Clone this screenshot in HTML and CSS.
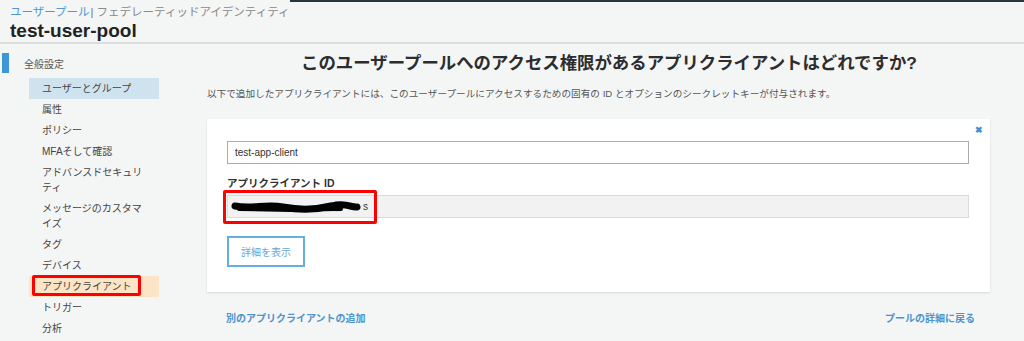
FILE: index.html
```html
<!DOCTYPE html>
<html lang="ja">
<head>
  <meta charset="UTF-8">
  <meta name="viewport" content="width=device-width, initial-scale=1.0">
  <title>test-user-pool - アプリクライアント</title>
  <link rel="stylesheet" href="styles.css">
</head>
<body>
  <div class="topbar"></div>

  <header class="page-header">
    <div class="crumbs">
      <a href="#" class="crumb-link">ユーザープール</a><span class="crumb-sep">|</span><span class="crumb-other">フェデレーティッドアイデンティティ</span>
    </div>
    <h1 class="pool-name">test-user-pool</h1>
  </header>

  <div class="layout">
    <nav class="sidebar">
      <div class="nav-section">
        <span class="nav-marker"></span>
        <span class="nav-title">全般設定</span>
      </div>
      <ul class="nav-list">
        <li class="nav-item selected">ユーザーとグループ</li>
        <li class="nav-item">属性</li>
        <li class="nav-item">ポリシー</li>
        <li class="nav-item">MFAそして確認</li>
        <li class="nav-item">アドバンスドセキュリティ</li>
        <li class="nav-item">メッセージのカスタマイズ</li>
        <li class="nav-item">タグ</li>
        <li class="nav-item">デバイス</li>
        <li class="nav-item current">アプリクライアント<span class="note-box"></span></li>
        <li class="nav-item">トリガー</li>
        <li class="nav-item">分析</li>
      </ul>
      <div class="nav-section">
        <span class="nav-marker"></span>
      </div>
    </nav>

    <main class="content">
      <h2 class="question">このユーザープールへのアクセス権限があるアプリクライアントはどれですか?</h2>
      <p class="intro">以下で追加したアプリクライアントには、このユーザープールにアクセスするための固有の ID とオプションのシークレットキーが付与されます。</p>

      <section class="client-card">
        <button class="close-btn" type="button">&#x2716;</button>
        <input class="client-name" type="text" value="test-app-client">
        <label class="field-label">アプリクライアント ID</label>
        <div class="client-id">
          <svg class="scribble" width="130" height="14" viewBox="0 0 130 14">
            <path d="M4 6 C20 9, 36 4, 52 7 S84 10, 100 6 S120 8, 126 7" fill="none" stroke="#000" stroke-width="7" stroke-linecap="round"/>
            <path d="M8 9 L60 10 L110 9" fill="none" stroke="#000" stroke-width="4" stroke-linecap="round"/>
          </svg>
          <span class="id-tail">s</span>
          <span class="note-box wide"></span>
        </div>
        <button class="details-btn" type="button">詳細を表示</button>
      </section>

      <div class="footer-links">
        <a href="#" class="action-link">別のアプリクライアントの追加</a>
        <a href="#" class="action-link">プールの詳細に戻る</a>
      </div>
    </main>
  </div>
</body>
</html>
```

FILE: styles.css
```css
html, body {
  height: 100%;
  overflow: hidden;
}

body {
  margin: 0;
  background-color: #f4f5f5;
  color: #444;
  font-family: "Liberation Sans", "Noto Sans CJK JP", sans-serif;
  position: relative;
}

.topbar {
  position: absolute;
  top: 0;
  left: 290px;
  right: 0;
  height: 2px;
  background: #2b3441;
}

.page-header {
  padding: 4px 10px 0;
  border-bottom: 2px solid #dcdddd;
}

.crumbs {
  font-size: 11.5px;
  line-height: 16px;
  color: #8a8a8a;
}

.crumb-link {
  color: #4f97cf;
  text-decoration: none;
}

.crumb-sep {
  color: #777;
  margin: 0 3px 0 1px;
}

.pool-name {
  margin: 0;
  font-size: 19px;
  line-height: 22px;
  color: #222;
}

.layout {
  display: flex;
}

/* sidebar */
.sidebar {
  width: 190px;
  flex-shrink: 0;
  padding-top: 9px;
}

.nav-section {
  display: flex;
  align-items: center;
  height: 20px;
}

.nav-marker {
  width: 7px;
  height: 20px;
  margin-left: 2px;
  background: #3d97d6;
}

.nav-title {
  margin-left: 15px;
  font-size: 10px;
  color: #555;
}

.nav-list {
  list-style: none;
  margin: 5px 0 5px;
  padding: 0;
}

.nav-item {
  position: relative;
  width: 130px;
  box-sizing: border-box;
  margin-left: 29px;
  padding: 3px 8px 3px 13px;
  font-size: 10px;
  line-height: 15px;
  color: #444;
}

.nav-item.selected {
  background: #cfe3ef;
}

.nav-item.current {
  background: #fbe5c6;
}

.note-box {
  position: absolute;
  left: 3px;
  top: -1px;
  width: 109px;
  height: 21px;
  box-sizing: border-box;
  border: 3px solid #f00;
  border-radius: 2px;
}

/* main */
.content {
  flex: 1;
  padding: 8px 34px 0 17px;
}

.question {
  margin: 0 0 13px 21px;
  text-align: center;
  font-size: 17.4px;
  line-height: 22px;
  color: #2d2d2d;
}

.intro {
  margin: 0 0 18px;
  font-size: 9.65px;
  line-height: 14px;
  color: #555;
}

.client-card {
  position: relative;
  background: #fff;
  padding: 22px 21px 25px 20px;
  box-shadow: 0 1px 2px rgba(0, 0, 0, 0.12);
}

.close-btn {
  position: absolute;
  top: 6px;
  right: 7px;
  padding: 0;
  border: none;
  background: none;
  color: #3f8fd0;
  font-size: 9px;
  font-weight: bold;
  cursor: pointer;
}

.client-name {
  display: block;
  width: 100%;
  height: 23px;
  box-sizing: border-box;
  padding: 0 7px;
  border: 1px solid #a9adad;
  font-family: inherit;
  font-size: 10px;
  color: #333;
}

.field-label {
  display: block;
  margin: 12px 0 5px;
  font-size: 10.5px;
  line-height: 14px;
  font-weight: bold;
  color: #333;
}

.client-id {
  position: relative;
  display: flex;
  align-items: center;
  height: 23px;
  box-sizing: border-box;
  padding-left: 3px;
  background: #f2f2f2;
  border: 1px solid #dadada;
}

.scribble {
  display: block;
}

.id-tail {
  margin-left: 2px;
  font-size: 10px;
  color: #333;
}

.note-box.wide {
  left: -5px;
  top: -6px;
  width: 154px;
  height: 34px;
}

.details-btn {
  display: block;
  margin-top: 18px;
  width: 78px;
  height: 31px;
  padding: 0;
  background: #fff;
  border: 2px solid #67ade0;
  color: #6aa6d6;
  font-family: inherit;
  font-size: 10px;
  cursor: pointer;
}

.footer-links {
  display: flex;
  justify-content: space-between;
  padding: 20px 15px 0 19px;
}

.action-link {
  font-size: 10px;
  line-height: 14px;
  font-weight: bold;
  color: #4d93cc;
  text-decoration: none;
}
```
